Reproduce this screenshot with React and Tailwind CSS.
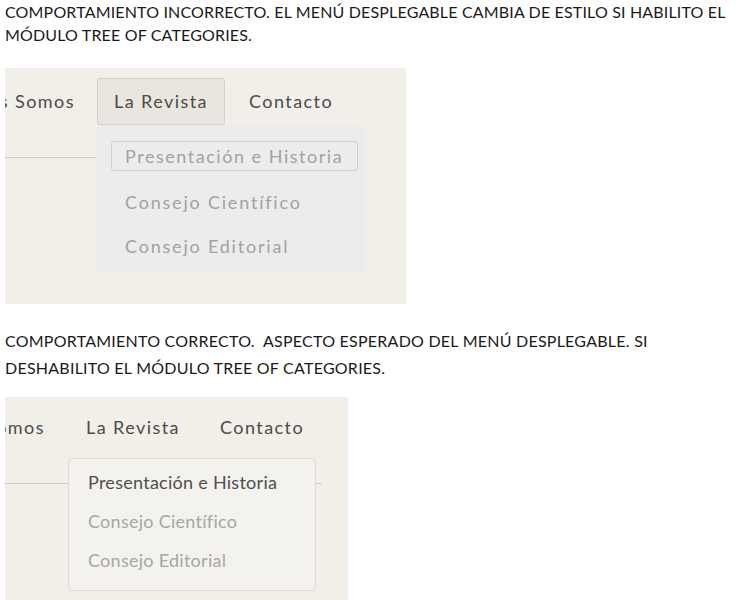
const heading = { fontFamily: '"Lato", "Open Sans", sans-serif' };

const NavClip = ({ width, text }) => (
    <div className={`flex justify-end overflow-hidden whitespace-nowrap ${width}`}>
        <span>{text}</span>
    </div>
)

const BrokenMenu = () => {
    return (
        <div className="relative w-[401px] h-[236px] bg-[#f2efe9] overflow-hidden">
            <div className="flex items-start pt-[10px] text-[18px] leading-[21px] tracking-[0.08em] text-[#4b4b4b]">
                <NavClip width="w-[70px] mt-[13px]" text="Quiénes Somos" />
                <div className="ml-[22px] px-[16px] py-[12px] border border-[#d4d1ca] rounded-[3px] bg-[#e9e6df] whitespace-nowrap">La Revista</div>
                <div className="ml-[24px] mt-[13px] whitespace-nowrap">Contacto</div>
            </div>
            <div className="mt-[32px] w-[300px] border-t border-[#cfccc5]"></div>

            {/* dropdown */}
            <div className="absolute left-[92px] top-[57px] w-[268px] h-[147px] bg-[#ececec] rounded-b-[3px] pt-[16px] pl-[14px] text-[18px] tracking-[0.1em] text-[#a2a2a2] whitespace-nowrap">
                <div className="w-[247px] h-[30px] flex items-center px-[13px] border border-[#d0d0d0] rounded-[3px] tracking-[0.085em]">Presentación e Historia</div>
                <div className="pl-[14px] mt-[20px] leading-[22px]">Consejo Científico</div>
                <div className="pl-[14px] mt-[22px] leading-[22px]">Consejo Editorial</div>
            </div>
        </div>
    )
}

const GoodMenu = () => {
    return (
        <div className="relative w-[343px] h-[203px] bg-[#f2efe9] overflow-hidden">
            <div className="flex items-start pt-[20px] text-[18px] leading-[21px] tracking-[0.08em] text-[#4b4b4b] whitespace-nowrap">
                <NavClip width="w-[40px]" text="Quiénes Somos" />
                <div className="ml-[41px]">La Revista</div>
                <div className="ml-[40px]">Contacto</div>
            </div>
            <div className="mt-[45px] w-[317px] border-t border-[#cfccc5]"></div>

            {/* dropdown */}
            <div className="absolute left-[63px] top-[61px] w-[248px] h-[133px] bg-[#f4f2ee] border border-[#dedbd4] rounded-[4px] pt-[13px] pl-[19px] text-[18px] leading-[21px] tracking-[0.015em] text-[#a6a6a6] whitespace-nowrap">
                <div className="text-[#4f4f4f]">Presentación e Historia</div>
                <div className="mt-[18px]">Consejo Científico</div>
                <div className="mt-[18px]">Consejo Editorial</div>
            </div>
        </div>
    )
}

export default function App() {
    return (
        <div className="w-[746px] h-[600px] bg-white pl-[5px] overflow-hidden" style={heading}>
            <p className="pt-[0px] text-[16px] leading-[23px] text-[#1a1a1a] whitespace-nowrap tracking-[0.01em]">
                COMPORTAMIENTO INCORRECTO. EL MENÚ DESPLEGABLE CAMBIA DE ESTILO SI HABILITO EL<br />
                MÓDULO TREE OF CATEGORIES.
            </p>
            <div className="mt-[22px]">
                <BrokenMenu />
            </div>
            <p className="mt-[23px] text-[16px] leading-[27px] text-[#1a1a1a] whitespace-nowrap tracking-[0.015em]">
                COMPORTAMIENTO CORRECTO.&nbsp; ASPECTO ESPERADO DEL MENÚ DESPLEGABLE. SI<br />
                DESHABILITO EL MÓDULO TREE OF CATEGORIES.
            </p>
            <div className="mt-[16px]">
                <GoodMenu />
            </div>
        </div>
    )
}
